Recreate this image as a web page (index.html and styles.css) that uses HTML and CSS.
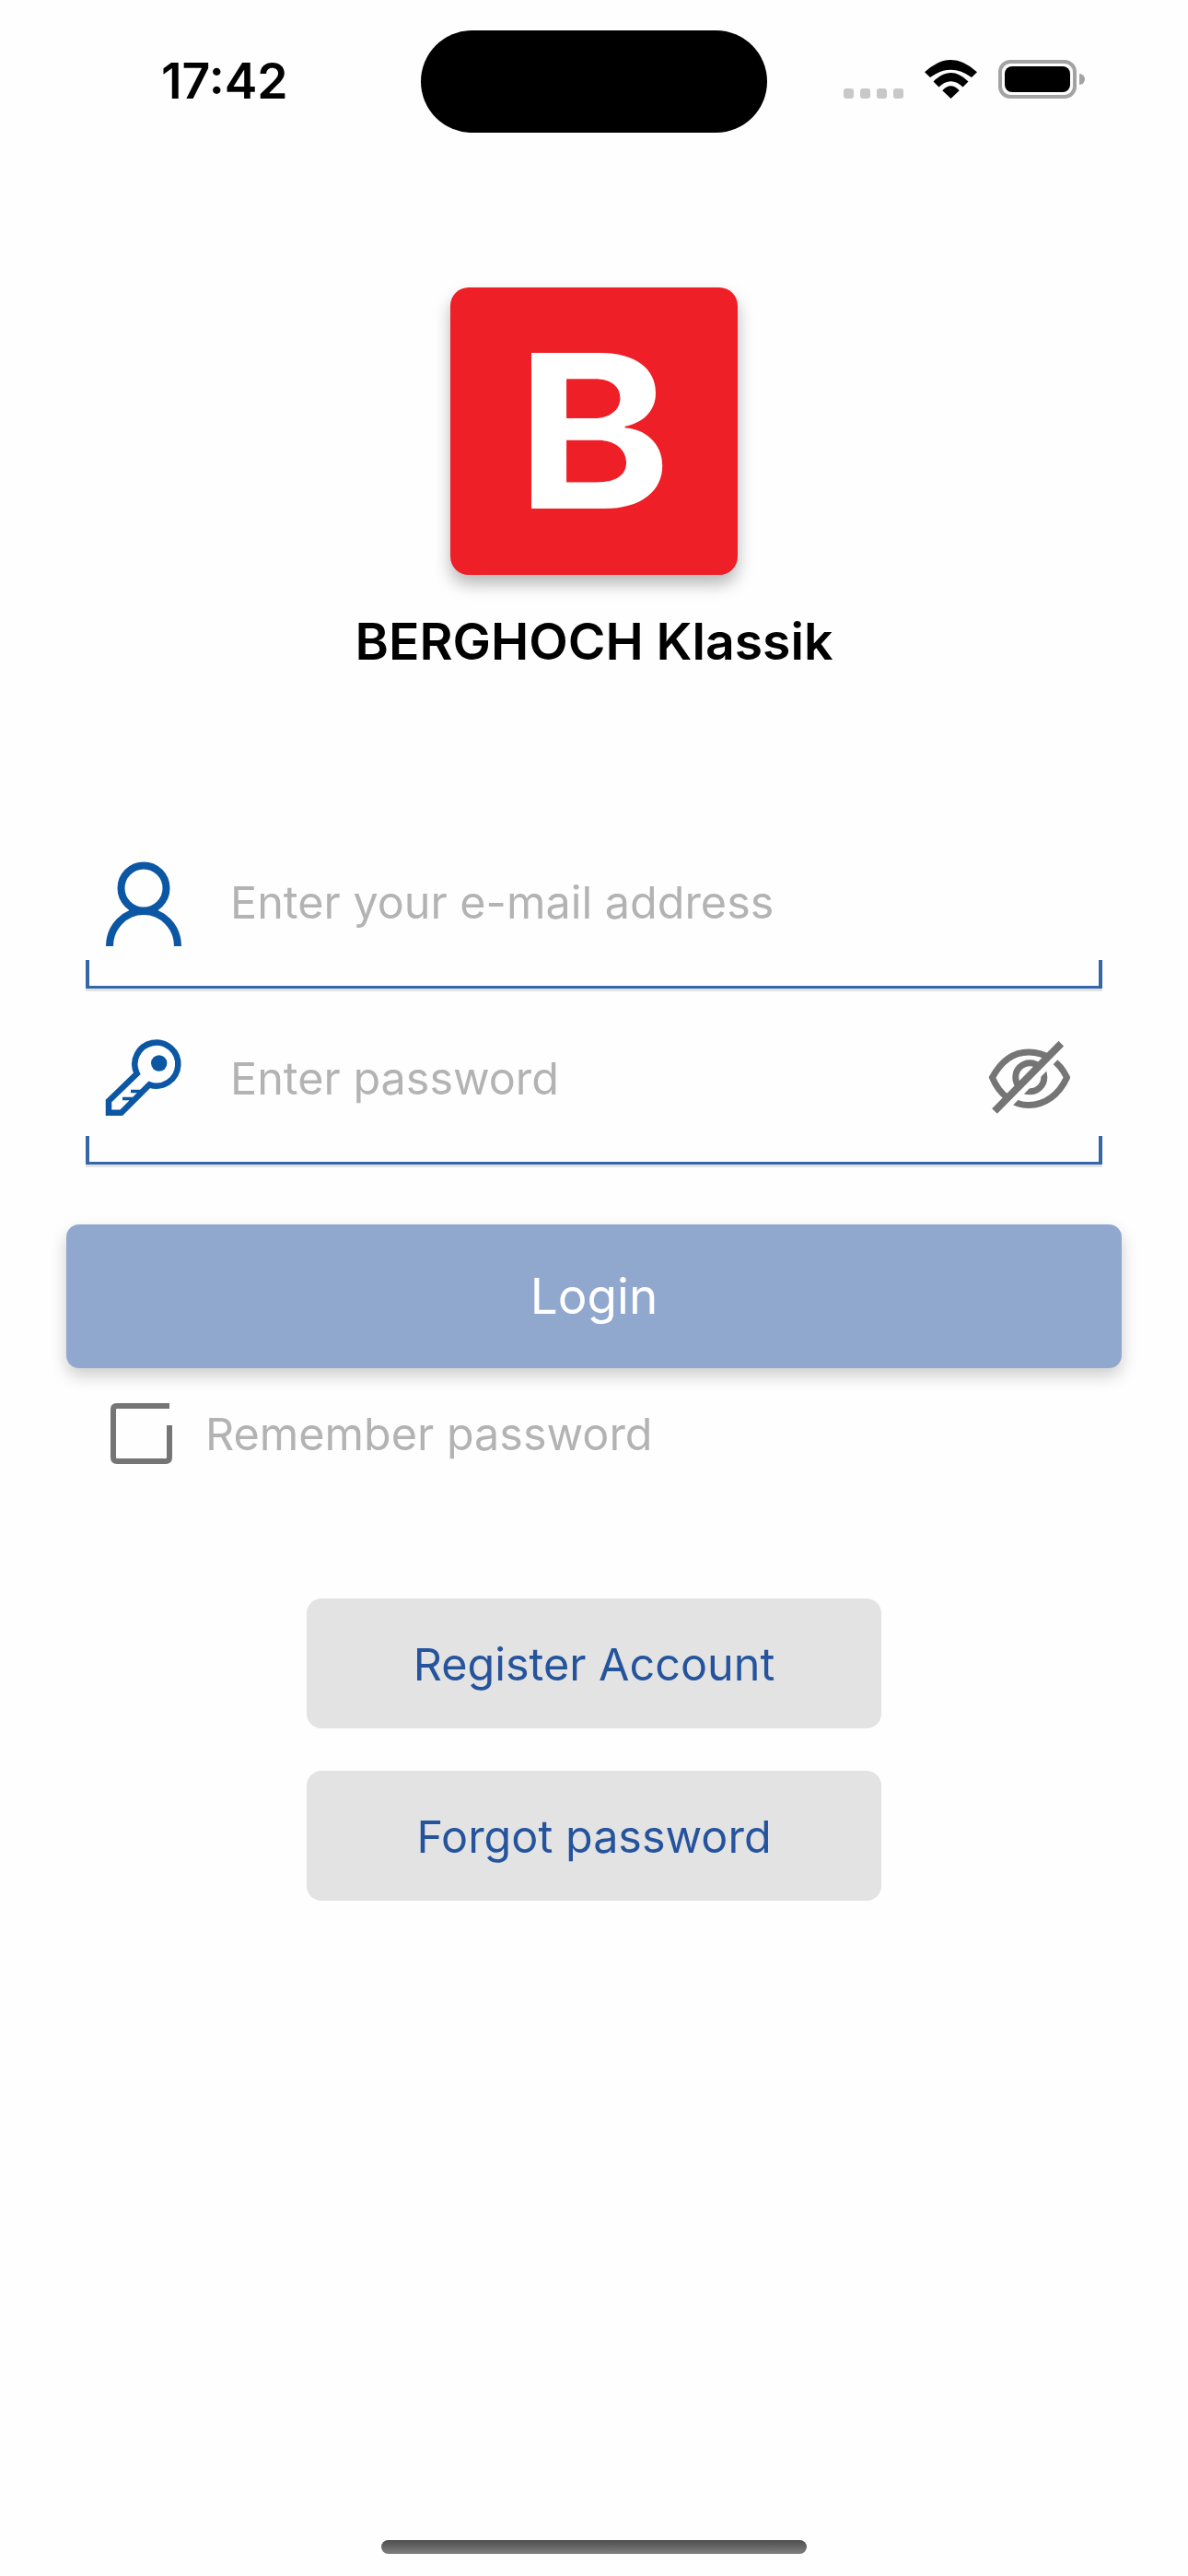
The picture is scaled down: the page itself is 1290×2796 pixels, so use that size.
FILE: index.html
```html
<!DOCTYPE html>
<html lang="en">
<head>
    <meta charset="UTF-8">
    <meta name="viewport" content="width=device-width, initial-scale=1.0">
    <title>BERGHOCH Klassik</title>
    <link rel="stylesheet" href="styles.css">
</head>
<body>
    <div class="screen">
        <div class="status-bar">
            <div class="time">17:42</div>
            <div class="island"></div>
            <div class="status-icons">
                <div class="signal"><span></span><span></span><span></span><span></span></div>
                <svg class="wifi" width="57" height="42" viewBox="0 0 57 42">
                    <path d="M0 13.3Q28.5 -13.3 57 13.3L51 19Q28.5 2.4 6 19Z"/>
                    <path d="M9.5 23.5Q28.5 4.5 47.5 23.5L41.5 29.5Q28.5 17 15.5 29.5Z"/>
                    <path d="M19.3 33.2Q28.5 23.5 37.7 33.2L28.5 42Z"/>
                </svg>
                <div class="battery"><div class="battery-level"></div></div>
                <div class="battery-nub"></div>
            </div>
        </div>

        <div class="logo"><span>B</span></div>
        <h1>BERGHOCH Klassik</h1>

        <form class="login-form">
            <div class="field">
                <div class="field-row">
                    <svg class="field-icon" width="82" height="91" viewBox="0 0 82 91">
                        <circle cx="41" cy="28" r="24.5"/>
                        <path d="M4 91A37 38 0 0 1 78 91"/>
                    </svg>
                    <input type="text" placeholder="Enter your e-mail address">
                </div>
                <div class="field-line"></div>
            </div>

            <div class="field">
                <div class="field-row">
                    <svg class="field-icon key-icon" width="82" height="83" viewBox="0 0 82 83">
                        <path d="M3 65L33.7 35.3A23.5 23.5 0 1 1 47.3 47.3L16.7 77.7H3Z"/>
                        <path class="key-teeth" d="M18 62.5H27V69M27 54.5H36V59.5"/>
                        <circle class="key-hole" cx="57.7" cy="24" r="8.7"/>
                    </svg>
                    <input type="password" placeholder="Enter password">
                    <svg class="eye-icon" width="89" height="79" viewBox="0 0 89 79">
                        <path d="M4.5 39.5C14 22 27 12 44 12C62 12 77 22 85.5 39.5C77 58 62 69.5 44 69.5C27 69.5 12 58 4.5 39.5Z"/>
                        <circle cx="45.3" cy="39.3" r="15.5"/>
                        <line class="eye-gap" x1="11" y1="80" x2="83" y2="7"/>
                        <line x1="7" y1="76" x2="79.3" y2="2.7"/>
                    </svg>
                </div>
                <div class="field-line"></div>
            </div>

            <button type="button" class="login-button">Login</button>

            <label class="remember">
                <svg width="67" height="66" viewBox="0 0 67 66">
                    <path d="M64 3H7Q3 3 3 7V59Q3 63 7 63H60Q64 63 64 59V24"/>
                </svg>
                <span>Remember password</span>
            </label>
        </form>

        <button type="button" class="link-button register">Register Account</button>
        <button type="button" class="link-button forgot">Forgot password</button>

        <div class="home-indicator"></div>
    </div>
</body>
</html>
```

FILE: styles.css
```css
* {
    box-sizing: border-box;
}

body {
    margin: 0;
    background: #fefefe;
    font-family: "Inter", "Liberation Sans", sans-serif;
}

.screen {
    display: flex;
    flex-direction: column;
    align-items: center;
    height: 2796px;
    overflow: hidden;
}

/* status bar */
.status-bar {
    display: flex;
    align-self: stretch;
    height: 144px;
    padding: 33px 0 0 175px;
}

.time {
    width: 282px;
    margin-top: 23px;
    font-size: 53.5px;
    line-height: 63px;
    font-weight: 600;
    color: #000;
}

.island {
    width: 376px;
    height: 111px;
    border-radius: 56px;
    background: #000;
}

.status-icons {
    display: flex;
    align-items: flex-end;
    height: 42px;
    margin: 32px 0 0 83px;
}

.signal {
    display: flex;
    gap: 7px;
}

.signal span {
    width: 11px;
    height: 11px;
    border-radius: 3px;
    background: #c8c8c8;
}

.wifi {
    margin-left: 23px;
}

.battery {
    width: 85px;
    height: 42px;
    margin-left: 23px;
    padding: 3px;
    border: 4px solid #a3a3a3;
    border-radius: 13px;
}

.battery-level {
    height: 100%;
    border-radius: 8px;
    background: #000;
}

.battery-nub {
    width: 6px;
    height: 12px;
    margin: 0 0 15px 3px;
    border-radius: 0 6px 6px 0;
    background: #a3a3a3;
}

/* logo */
.logo {
    display: flex;
    align-items: center;
    justify-content: center;
    width: 312px;
    height: 312px;
    margin-top: 168px;
    border-radius: 20px;
    background: #ee1f27;
    box-shadow: 0 10px 18px rgba(0, 0, 0, 0.28);
}

.logo span {
    font-size: 232px;
    line-height: 1;
    font-weight: 700;
    color: #fff;
    transform: scaleX(1.1);
}

h1 {
    margin: 39px 0 0;
    font-size: 55.3px;
    line-height: 66px;
    font-weight: 600;
    color: #000;
}

/* form */
.login-form {
    display: flex;
    flex-direction: column;
    width: 1146px;
    margin-top: 207px;
}

.field {
    margin: 0 21px 54px;
}

.field:nth-child(2) {
    margin-bottom: 0;
}

.field-row {
    display: flex;
    align-items: flex-start;
    height: 106px;
    padding: 0 35px 0 22px;
}

.field-icon {
    flex: none;
    overflow: visible;
    fill: none;
    stroke: #0b57a4;
    stroke-width: 8;
}

.key-icon {
    margin-top: 3px;
    stroke-width: 6.5;
}

.key-teeth {
    stroke-width: 3.5;
}

.key-hole {
    fill: #0b57a4;
    stroke: none;
}

input {
    flex: 1;
    min-width: 0;
    height: 87px;
    margin-left: 53px;
    padding: 0;
    border: none;
    outline: none;
    background: transparent;
    font-family: inherit;
    font-size: 48.5px;
    color: #333;
}

input::placeholder {
    color: #b3b3b3;
    opacity: 1;
}

.eye-icon {
    flex: none;
    margin-top: 3px;
    fill: none;
    stroke: #757575;
    stroke-width: 7;
}

.eye-icon line {
    stroke-width: 8;
}

.eye-icon .eye-gap {
    stroke: #fefefe;
}

.field-line {
    height: 31px;
    border: 4px solid #3566a8;
    border-top: none;
    border-bottom-width: 3px;
    box-shadow: 0 3px 0 #e3e3e3;
}

.login-button {
    height: 156px;
    margin-top: 65px;
    border: none;
    border-radius: 14px;
    background: #91a8ce;
    box-shadow: 0 8px 18px rgba(0, 0, 0, 0.2);
    font-family: inherit;
    font-size: 53px;
    color: #fff;
}

.remember {
    display: flex;
    align-items: center;
    gap: 36px;
    margin: 38px 0 0 48px;
    font-size: 48.5px;
    color: #b3b3b3;
}

.remember svg {
    flex: none;
    fill: none;
    stroke: #757575;
    stroke-width: 6;
}

/* register and forgot */
.link-button {
    width: 624px;
    height: 141px;
    padding: 2px 0 0;
    border: none;
    border-radius: 16px;
    background: #e3e3e3;
    font-family: inherit;
    font-size: 48.5px;
    color: #25549d;
}

.register {
    margin-top: 146px;
}

.forgot {
    margin-top: 46px;
}

.home-indicator {
    width: 462px;
    height: 15px;
    margin-top: auto;
    margin-bottom: 24px;
    border-radius: 8px;
    background: linear-gradient(#4d4d4d, #808080);
}
```
